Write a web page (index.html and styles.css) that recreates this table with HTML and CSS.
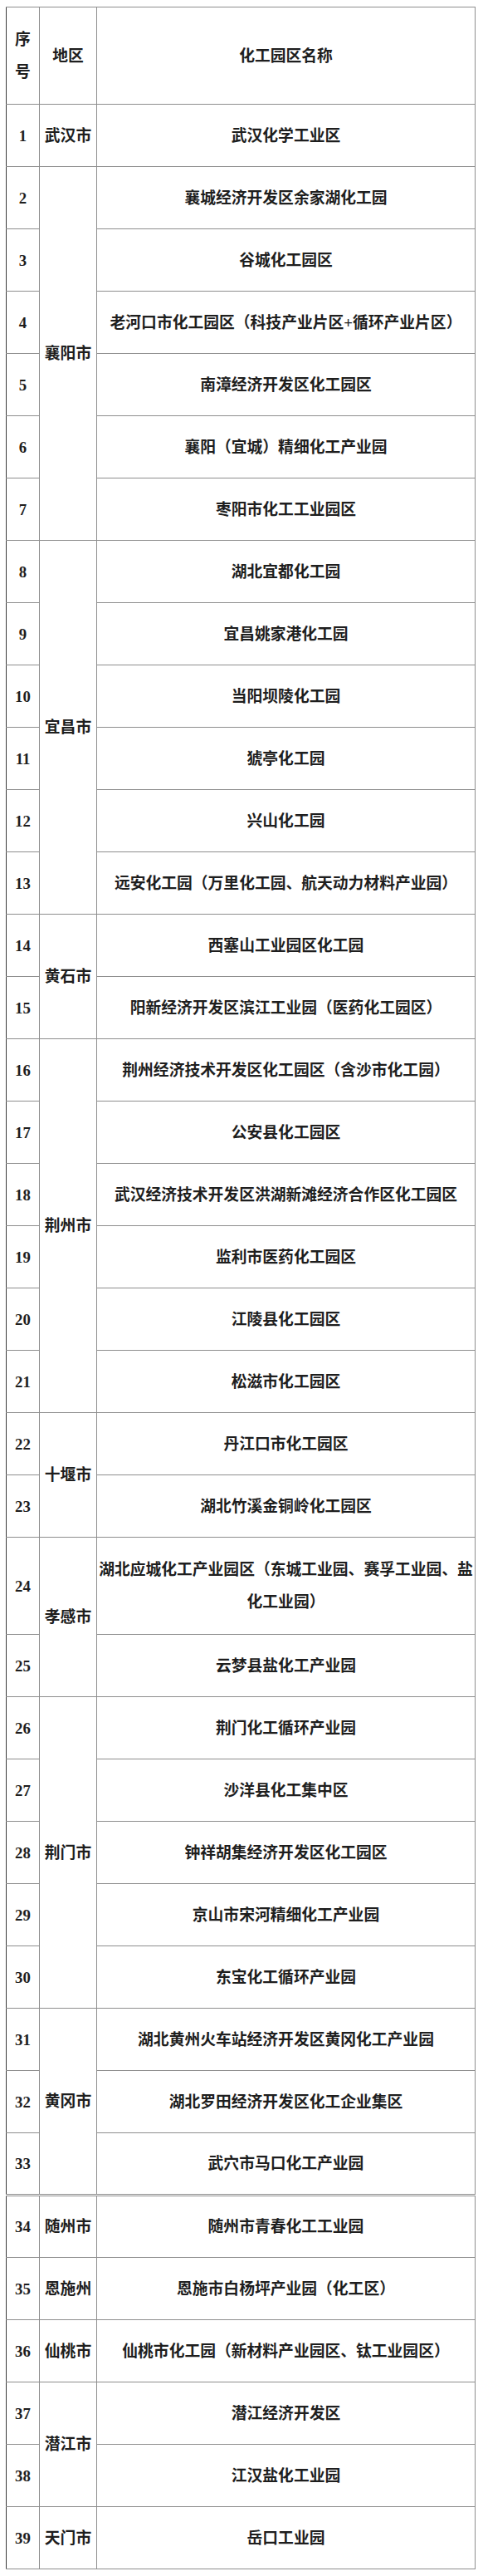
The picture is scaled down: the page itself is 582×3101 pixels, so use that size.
FILE: index.html
```html
<!DOCTYPE html>
<html lang="zh-CN">
<head>
<meta charset="utf-8">
<title>湖北省化工园区名单</title>
<link rel="stylesheet" href="styles.css">
</head>
<body>
<table class="parks">
  <colgroup>
    <col class="c-no">
    <col class="c-area">
    <col class="c-name">
  </colgroup>
  <thead>
    <tr class="head">
      <th class="no">序<br>号</th>
      <th class="area">地区</th>
      <th class="name">化工园区名称</th>
    </tr>
  </thead>
  <tbody>
    <tr><td class="no">1</td><td class="area">武汉市</td><td class="name">武汉化学工业区</td></tr>
    <tr><td class="no">2</td><td class="area" rowspan="6">襄阳市</td><td class="name">襄城经济开发区余家湖化工园</td></tr>
    <tr><td class="no">3</td><td class="name">谷城化工园区</td></tr>
    <tr><td class="no">4</td><td class="name">老河口市化工园区（科技产业片区+循环产业片区）</td></tr>
    <tr><td class="no">5</td><td class="name">南漳经济开发区化工园区</td></tr>
    <tr><td class="no">6</td><td class="name">襄阳（宜城）精细化工产业园</td></tr>
    <tr><td class="no">7</td><td class="name">枣阳市化工工业园区</td></tr>
    <tr><td class="no">8</td><td class="area" rowspan="6">宜昌市</td><td class="name">湖北宜都化工园</td></tr>
    <tr><td class="no">9</td><td class="name">宜昌姚家港化工园</td></tr>
    <tr><td class="no">10</td><td class="name">当阳坝陵化工园</td></tr>
    <tr><td class="no">11</td><td class="name">猇亭化工园</td></tr>
    <tr><td class="no">12</td><td class="name">兴山化工园</td></tr>
    <tr><td class="no">13</td><td class="name">远安化工园（万里化工园、航天动力材料产业园）</td></tr>
    <tr><td class="no">14</td><td class="area" rowspan="2">黄石市</td><td class="name">西塞山工业园区化工园</td></tr>
    <tr><td class="no">15</td><td class="name">阳新经济开发区滨江工业园（医药化工园区）</td></tr>
    <tr><td class="no">16</td><td class="area" rowspan="6">荆州市</td><td class="name">荆州经济技术开发区化工园区（含沙市化工园）</td></tr>
    <tr><td class="no">17</td><td class="name">公安县化工园区</td></tr>
    <tr><td class="no">18</td><td class="name">武汉经济技术开发区洪湖新滩经济合作区化工园区</td></tr>
    <tr><td class="no">19</td><td class="name">监利市医药化工园区</td></tr>
    <tr><td class="no">20</td><td class="name">江陵县化工园区</td></tr>
    <tr><td class="no">21</td><td class="name">松滋市化工园区</td></tr>
    <tr><td class="no">22</td><td class="area" rowspan="2">十堰市</td><td class="name">丹江口市化工园区</td></tr>
    <tr><td class="no">23</td><td class="name">湖北竹溪金铜岭化工园区</td></tr>
    <tr class="tall"><td class="no">24</td><td class="area" rowspan="2">孝感市</td><td class="name">湖北应城化工产业园区（东城工业园、赛孚工业园、盐化工业园）</td></tr>
    <tr><td class="no">25</td><td class="name">云梦县盐化工产业园</td></tr>
    <tr><td class="no">26</td><td class="area" rowspan="5">荆门市</td><td class="name">荆门化工循环产业园</td></tr>
    <tr><td class="no">27</td><td class="name">沙洋县化工集中区</td></tr>
    <tr><td class="no">28</td><td class="name">钟祥胡集经济开发区化工园区</td></tr>
    <tr><td class="no">29</td><td class="name">京山市宋河精细化工产业园</td></tr>
    <tr><td class="no">30</td><td class="name">东宝化工循环产业园</td></tr>
    <tr><td class="no">31</td><td class="area" rowspan="3">黄冈市</td><td class="name">湖北黄州火车站经济开发区黄冈化工产业园</td></tr>
    <tr><td class="no">32</td><td class="name">湖北罗田经济开发区化工企业集区</td></tr>
    <tr><td class="no">33</td><td class="name">武穴市马口化工产业园</td></tr>
    <tr class="seam"><td class="no">34</td><td class="area">随州市</td><td class="name">随州市青春化工工业园</td></tr>
    <tr><td class="no">35</td><td class="area">恩施州</td><td class="name">恩施市白杨坪产业园（化工区）</td></tr>
    <tr><td class="no">36</td><td class="area">仙桃市</td><td class="name">仙桃市化工园（新材料产业园区、钛工业园区）</td></tr>
    <tr><td class="no">37</td><td class="area" rowspan="2">潜江市</td><td class="name">潜江经济开发区</td></tr>
    <tr><td class="no">38</td><td class="name">江汉盐化工业园</td></tr>
    <tr><td class="no">39</td><td class="area">天门市</td><td class="name">岳口工业园</td></tr>
  </tbody>
</table>
</body>
</html>
```

FILE: styles.css
```css
html, body {
  margin: 0;
  padding: 0;
  background: #ffffff;
}

.parks {
  margin: 8px 0 0 7px;
  border-collapse: collapse;
  table-layout: fixed;
  width: 565px;
  font-family: "Liberation Serif", "Noto Sans CJK SC", serif;
  font-size: 18.8px;
  font-weight: bold;
  color: #1e1e1e;
}

.c-no { width: 40px; }
.c-area { width: 69px; }
.c-name { width: 456px; }

.parks th,
.parks td {
  border: 1px solid #8e8e8e;
  padding: 0;
  text-align: center;
  vertical-align: middle;
  line-height: 39px;
  font-weight: bold;
}

.parks td.no,
.parks th.no {
  border-left-color: #3a3a3a;
}

.parks tr {
  height: 75px;
}

.parks tr.head,
.parks tr.tall {
  height: 117px;
}

.parks tr.seam td {
  border-top: 3px double #8e8e8e;
}
```
